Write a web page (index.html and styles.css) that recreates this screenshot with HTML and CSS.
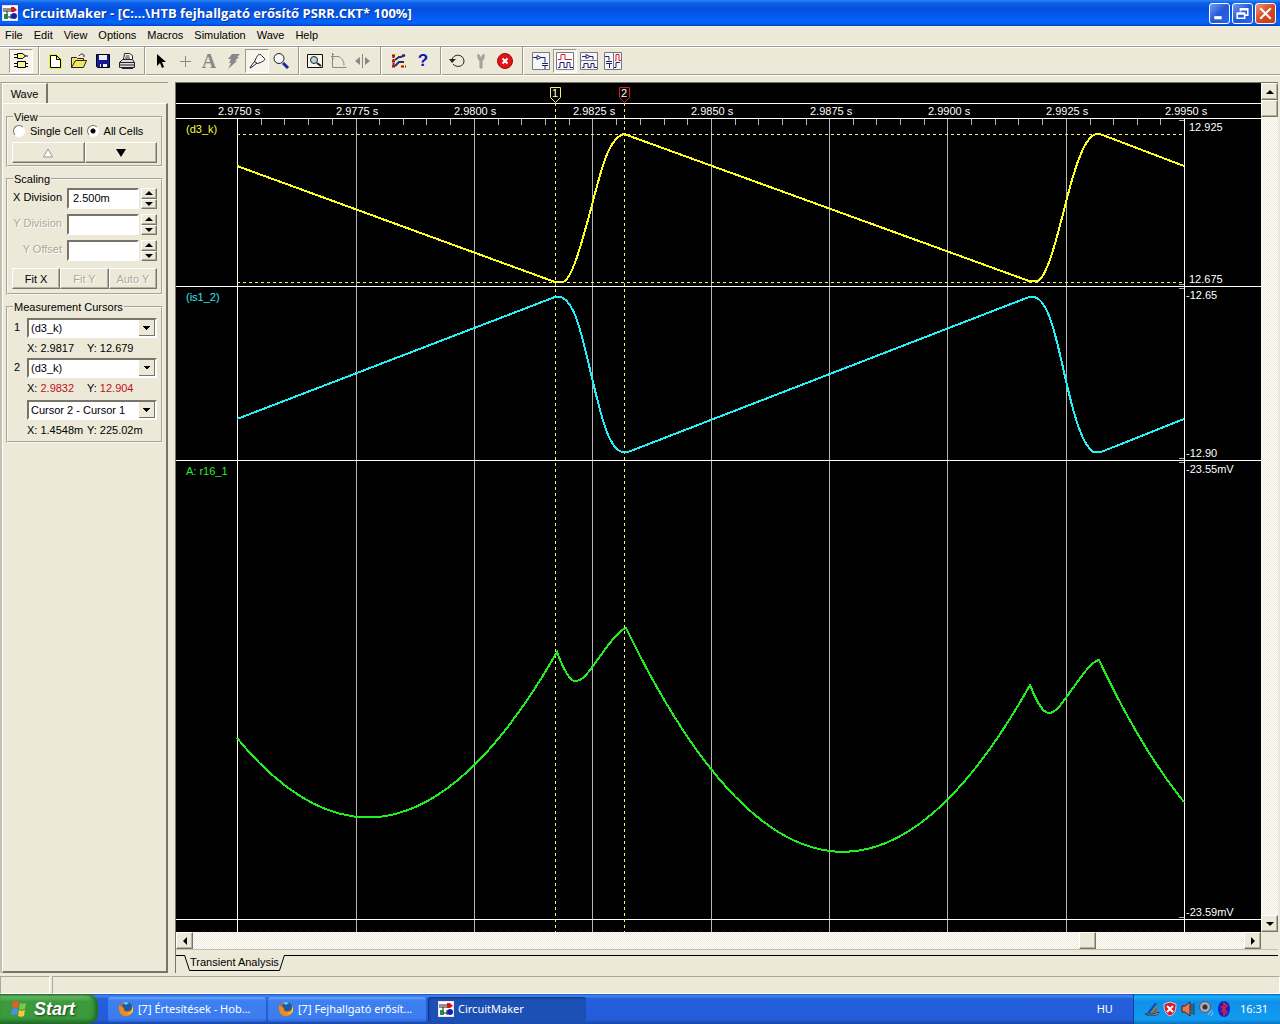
FILE: index.html
```html
<!DOCTYPE html>
<html lang="hu">
<head>
<meta charset="utf-8">
<title>CircuitMaker</title>
<link rel="stylesheet" href="styles.css">
</head>
<body>
<svg class="defs" aria-hidden="true">
  <symbol id="app-logo" viewBox="0 0 16 16">
    <rect width="16" height="16" fill="#fbd9fb"/><rect x="1" y="1" width="14" height="14" fill="#fff"/>
    <path d="M1 4h9M1 6h4v6h4M5 6h4M9 9v5" stroke="#222" fill="none"/>
    <path d="M9 2h3l3 3-3 2H9z" fill="#d01818"/><path d="M2 9h4v5H2z" fill="#159048"/><circle cx="12" cy="11" r="3" fill="#1020b0"/>
  </symbol>
  <symbol id="firefox" viewBox="0 0 16 16">
    <circle cx="8" cy="8" r="7" fill="#e86a10"/><circle cx="9" cy="6" r="5" fill="#1d5ba8"/><path d="M5 2a5 5 0 0 1 6 0L8 4z" fill="#6cc4ee"/>
    <path d="M1 4c1 2 3 1 5 3-1 3 2 4 5 3 3 0 3-3 3-5 2 4 0 9-5 10S0 11 1 4z" fill="#f08a18"/><path d="M14 5c1 4-1 7-5 8 3 1 7-1 6-6z" fill="#fbd034"/>
  </symbol>
</svg>
<div class="app">
  <header class="titlebar">
    <svg class="logo"><use href="#app-logo"/></svg>
    <h1>CircuitMaker - [C:...\HTB fejhallgató erősítő PSRR.CKT* 100%]</h1>
    <div class="window-buttons">
      <button type="button" aria-label="Minimize"><svg viewBox="0 0 18 18"><path d="M4 13h7" stroke="#fff" stroke-width="3"/></svg></button>
      <button type="button" aria-label="Restore"><svg viewBox="0 0 18 18"><path d="M7 7V4.500h7v6h-3M7 5.500h7M4 8.500h7v5H4zM4 9.500h7" fill="none" stroke="#fff" stroke-width="1.500"/></svg></button>
      <button type="button" class="close" aria-label="Close"><svg viewBox="0 0 18 18"><path d="M4 4l10 10M14 4L4 14" stroke="#fff" stroke-width="2"/></svg></button>
    </div>
  </header>
  <nav class="menubar">
    <button type="button">File</button><button type="button">Edit</button><button type="button">View</button><button type="button">Options</button><button type="button">Macros</button><button type="button">Simulation</button><button type="button">Wave</button><button type="button">Help</button>
  </nav>
  <div class="toolbar" role="toolbar">
    <div class="tool-group">
      <button type="button" class="pressed" aria-label="Parts"><svg viewBox="0 0 18 18"><path d="M5.500 1.500h5l3 2.500-3 2.500h-5zM2 2.500h3M2 5.500h3M13 4h3M5.500 9.500h8v6h-8zM2 11.500h3M2 14.500h3M13 11.500h3M13 14.500h3" fill="#f8f490" stroke="#000"/></svg></button>
    </div>
    <div class="tool-group">
      <button type="button" aria-label="New"><svg viewBox="0 0 18 18"><path d="M4.500 3.500h6l4 4v8h-10z" fill="#fff" stroke="#f2ee38" stroke-width="3"/><path d="M4.500 3.500h6l4 4v8h-10zM10.500 3.500v4h4" fill="#fff" stroke="#000"/></svg></button>
      <button type="button" aria-label="Open"><svg viewBox="0 0 18 18"><path d="M1.500 15.500v-10h5l1 1h6v2h3l-3 7zM1.500 15.500l4-7h8" fill="#f2e85c" stroke="#222"/><path d="M9 4c2-3 4-2 5-1v2" fill="none" stroke="#222"/></svg></button>
      <button type="button" aria-label="Save"><svg viewBox="0 0 18 18"><path d="M2.500 2.500h13v13h-12l-1-1z" fill="#1418a0" stroke="#000"/><path d="M5 3h8v5H5zM6 12h7v3H6z" fill="#eee"/><path d="M7 12h2v3H7z" fill="#14188c"/></svg></button>
      <button type="button" aria-label="Print"><svg viewBox="0 0 18 18"><path d="M5.500 7.500l1-6h5l3 2v4M7.500 4h4M7 6h5" fill="#fff" stroke="#222"/><path d="M1.500 10.500l3-3h10l2 3v5h-15zM1.500 10.500h15M1.500 13h15M4 16.500h11" fill="#ddd" stroke="#222"/></svg></button>
    </div>
    <div class="tool-group">
      <button type="button" aria-label="Select"><svg viewBox="0 0 18 18"><path d="M5 2v12l3-3 2 5 2-1-2-5h4z" fill="#000"/></svg></button>
      <button type="button" aria-label="Wire" disabled><svg viewBox="0 0 18 18"><path d="M9.500 4v11M4 9.500h11" stroke="#888"/></svg></button>
      <button type="button" class="letter" aria-label="Text" disabled>A</button>
      <button type="button" aria-label="Delete" disabled><svg viewBox="0 0 18 18"><path d="M8 2h8l-3 3h2l-4 4h2L4 17l3-6H5l2-4H4z" fill="#888"/></svg></button>
      <button type="button" class="pressed" aria-label="Probe"><svg viewBox="0 0 18 18"><path d="M8.500 5.500c1-3 4-4 5-2l3 3c1 2-2 3-4 4l-3 1-3-2zM7 9l-4 5-1 2 2-1 5-4" fill="#f8f8f8" stroke="#222"/></svg></button>
      <button type="button" aria-label="Zoom"><svg viewBox="0 0 18 18"><circle cx="7" cy="6.500" r="5" fill="#f4f6fa" stroke="#222"/><path d="M11 11l5 5" stroke="#1a28a0" stroke-width="3"/></svg></button>
    </div>
    <div class="tool-group">
      <button type="button" aria-label="Fit"><svg viewBox="0 0 18 18"><path d="M1.500 2.500h15v13h-15z" fill="#f6f6ee" stroke="#111"/><circle cx="8" cy="8" r="3.500" fill="#b9d3d5" stroke="#222"/><path d="M11 11l4 3" stroke="#222" stroke-width="2"/></svg></button>
      <button type="button" aria-label="Rotate" disabled><svg viewBox="0 0 18 18"><path d="M2.500 1v14.500h14M1 4.500h7M4 2L1.500 4.500 4 7M8 4.500c4 1 6 5 6 9" fill="none" stroke="#888"/></svg></button>
      <button type="button" aria-label="Mirror" disabled><svg viewBox="0 0 18 18"><path d="M8.500 2v14" stroke="#888"/><path d="M6 5v8L1 9zM11 5v8l5-4z" fill="#888"/></svg></button>
    </div>
    <div class="tool-group wide">
      <button type="button" aria-label="Simulation mode"><svg viewBox="0 0 18 18"><path d="M5 2h10v13H5z" fill="#f8ec9a"/><path d="M2 3.500h4M12 3.500h4M2 9.500h3M2 14.500h4M11 14.500h5M3.500 3v12" stroke="#a01010" stroke-dasharray="3 1" stroke-width="2"/><path d="M5 8l4-3h2l4-2M5 14l4-4h5" fill="none" stroke="#1828b0" stroke-width="2"/></svg></button>
      <button type="button" class="letter help" aria-label="Help">?</button>
    </div>
    <div class="tool-group">
      <button type="button" aria-label="Reset"><svg viewBox="0 0 18 18"><path d="M4 8c1-7 12-6 12 1 0 6-8 7-11 3" fill="none" stroke="#222"/><path d="M1 7h7l-4 4z" fill="#222"/></svg></button>
      <button type="button" aria-label="Step" disabled><svg viewBox="0 0 18 18"><path d="M6 2v4l1 2h1v8h2V8h1l1-2V2l-2 2v2H8V4z" fill="#aaa" stroke="#999"/></svg></button>
      <button type="button" aria-label="Stop"><svg viewBox="0 0 18 18"><circle cx="9" cy="9" r="7.500" fill="#e01414" stroke="#a00808"/><path d="M6.500 6.500l5 5M11.500 6.500l-5 5" stroke="#fff" stroke-width="2"/></svg></button>
    </div>
    <div class="tool-group wide">
      <button type="button" aria-label="Schematic"><svg viewBox="0 0 18 18"><path d="M.5.5h17v17H.5z" fill="#f6f6f6" stroke="#778"/><path d="M1 5.500h4v-2l4 2-4 2v-2M9 5.500h4v5M10 11.500h6M10 13.500h6M13 14v3" fill="none" stroke="#222270"/></svg></button>
      <button type="button" class="pressed" aria-label="Waves"><svg viewBox="0 0 18 18"><path d="M.5.5h17v17H.5z" fill="#fff" stroke="#778"/><path d="M2 7.500h3v-5h4v5h7" fill="none" stroke="#d02020"/><path d="M2 15.500h2v-5h4v5h3v-5h3v5h3" fill="none" stroke="#222270"/></svg></button>
      <button type="button" aria-label="Split horizontally"><svg viewBox="0 0 18 18"><path d="M.5.5h17v17H.5zM0 8.500h18" fill="#f6f6f6" stroke="#778"/><path d="M2 4.500h4v-2l4 2-4 2v-2M10 4.500h3v3M2 15.500h2v-4h4v4h3v-4h3v4h3" fill="none" stroke="#222270"/></svg></button>
      <button type="button" aria-label="Split vertically"><svg viewBox="0 0 18 18"><path d="M.5.5h17v17H.5zM9.500 0v18" fill="#f6f6f6" stroke="#778"/><path d="M1 4.500h4v4M2 9.500h6M2 11.500h6M5.500 12v4M10 15.500h2v-5h4" fill="none" stroke="#222270"/><path d="M11 8.500h1v-6h3v6h2" fill="none" stroke="#d02020"/></svg></button>
    </div>
  </div>

  <main class="workspace">
    <aside class="side">
      <div class="side-tabs"><button type="button">Wave</button></div>
      <form class="side-page">
        <fieldset>
          <legend>View</legend>
          <div class="radios">
            <label><input type="radio" name="cells">Single Cell</label>
            <label><input type="radio" name="cells" checked>All Cells</label>
          </div>
          <div class="button-row">
            <button type="button" aria-label="Previous cell"><svg class="cell-arrow" viewBox="0 0 10 10"><path d="M.5 9L5 1l4.500 8z" fill="#fff" stroke="#999"/></svg></button>
            <button type="button" aria-label="Next cell"><svg class="cell-arrow" viewBox="0 0 10 10"><path d="M0 1h10L5 9z"/></svg></button>
          </div>
        </fieldset>
        <fieldset class="scaling">
          <legend>Scaling</legend>
          <div class="field"><label for="xdiv">X Division</label><input id="xdiv" type="text" value="2.500m">
            <span class="spin"><button type="button" aria-label="Up"><svg viewBox="0 0 8 4"><path d="M0 4h8L4 0z"/></svg></button><button type="button" aria-label="Down"><svg viewBox="0 0 8 4"><path d="M0 0h8L4 4z"/></svg></button></span></div>
          <div class="field off"><label for="ydiv">Y Division</label><input id="ydiv" type="text" disabled>
            <span class="spin"><button type="button" aria-label="Up"><svg viewBox="0 0 8 4"><path d="M0 4h8L4 0z"/></svg></button><button type="button" aria-label="Down"><svg viewBox="0 0 8 4"><path d="M0 0h8L4 4z"/></svg></button></span></div>
          <div class="field off"><label for="yoff">Y Offset</label><input id="yoff" type="text" disabled>
            <span class="spin"><button type="button" aria-label="Up"><svg viewBox="0 0 8 4"><path d="M0 4h8L4 0z"/></svg></button><button type="button" aria-label="Down"><svg viewBox="0 0 8 4"><path d="M0 0h8L4 4z"/></svg></button></span></div>
          <div class="button-row">
            <button type="button">Fit X</button><button type="button" disabled>Fit Y</button><button type="button" disabled>Auto Y</button>
          </div>
        </fieldset>
        <fieldset class="cursors">
          <legend>Measurement Cursors</legend>
          <div class="cursor">
            <label for="c1">1</label><select id="c1"><option>(d3_k)</option></select>
            <div class="readout"><span>X: 2.9817</span><span>Y: 12.679</span></div>
          </div>
          <div class="cursor">
            <label for="c2">2</label><select id="c2"><option>(d3_k)</option></select>
            <div class="readout"><span>X: <b>2.9832</b></span><span>Y: <b>12.904</b></span></div>
          </div>
          <div class="cursor">
            <span></span><select aria-label="Cursor difference"><option>Cursor 2 - Cursor 1</option></select>
            <div class="readout"><span>X: 1.4548m</span><span>Y: 225.02m</span></div>
          </div>
        </fieldset>
      </form>
    </aside>

    <section class="plot">
      <svg class="chart" viewBox="176 83 1085 849" role="img" aria-label="Transient Analysis">
        <g class="crisp">
          <path class="grid" d="M356.500 119V932M474.500 119V932M592.500 119V932M711.500 119V932M829.500 119V932M947.500 119V932M1066.500 119V932"/>
          <path class="grid" d="M261.500 119v6M284.500 119v6M308.500 119v6M332.500 119v6M379.500 119v6M403.500 119v6M426.500 119v6M450.500 119v6M498.500 119v6M521.500 119v6M545.500 119v6M569.500 119v6M616.500 119v6M640.500 119v6M664.500 119v6M687.500 119v6M735.500 119v6M758.500 119v6M782.500 119v6M806.500 119v6M853.500 119v6M876.500 119v6M900.500 119v6M924.500 119v6M971.500 119v6M995.500 119v6M1018.500 119v6M1042.500 119v6M1090.500 119v6M1113.500 119v6M1137.500 119v6M1160.500 119v6"/>
          <path class="grid" d="M1179 120.500h5M1179 284.500h5M1179 288.500h5M1179 458.500h5M1179 462.500h5M1179 917.500h5"/>
          <path class="axis" d="M176 103.500H1261M176 118.500H1261M176 286.500H1261M176 460.500H1261M176 919.500H1261M237.500 119V932M1184.500 119V932"/>
          <path class="cursor-line" d="M237 134.500H1184M237 282.500H1184M555.500 103V932M624.500 103V932"/>
          <g class="waves">
            <path class="yellow" d="M237 166L555 282H563C572 280 582 242 592 205C602 166 609 138 624 134L1029 281H1037C1046 280 1056 242 1066 202C1076 163 1085 137 1096 134H1100L1184 166"/>
            <path class="cyan" d="M237 419L555 297C574 292 582 336 592 378C602 420 609 448 622 452H628L1029 297C1048 292 1056 337 1066 381C1076 424 1083 444 1093 452H1101L1184 419"/>
            <path class="green" d="M237 738Q397 932 557 652C563 668 569 681 575 681C583 681 588 673 598 659C609 644 618 631 626 628Q828 1045 1030 685C1036 700 1042 713 1049 713C1057 713 1064 700 1073 688C1084 673 1091 662 1099 660Q1141 749 1184 802"/>
          </g>
        </g>
        <path class="flag one" d="M550.500 87.500h10v10l-5 5-5-5z"/><text x="552" y="97">1</text>
        <path class="flag two" d="M619.500 87.500h10v10l-5 5-5-5z"/><text x="621" y="97">2</text>
        <g>
          <text x="218" y="115">2.9750 s</text><text x="336" y="115">2.9775 s</text><text x="454" y="115">2.9800 s</text><text x="573" y="115">2.9825 s</text><text x="691" y="115">2.9850 s</text><text x="810" y="115">2.9875 s</text><text x="928" y="115">2.9900 s</text><text x="1046" y="115">2.9925 s</text><text x="1165" y="115">2.9950 s</text>
          <text x="1189" y="131">12.925</text><text x="1189" y="283">12.675</text><text x="1186" y="299">-12.65</text><text x="1186" y="457">-12.90</text><text x="1186" y="473">-23.55mV</text><text x="1186" y="916">-23.59mV</text>
        </g>
        <text class="yellow-text" x="186" y="133">(d3_k)</text><text class="cyan-text" x="186" y="301">(is1_2)</text><text class="green-text" x="186" y="475">A: r16_1</text>
      </svg>
      <div class="scroll vertical">
        <button type="button" aria-label="Scroll up"><svg viewBox="0 0 8 4"><path d="M0 4h8L4 0z"/></svg></button>
        <span class="thumb"></span><span class="rest"></span>
        <button type="button" aria-label="Scroll down"><svg viewBox="0 0 8 4"><path d="M0 0h8L4 4z"/></svg></button>
      </div>
      <div class="scroll horizontal">
        <button type="button" aria-label="Scroll left"><svg viewBox="0 0 4 8"><path d="M4 0v8L0 4z"/></svg></button>
        <span class="before"></span><span class="thumb"></span><span class="rest"></span>
        <button type="button" aria-label="Scroll right"><svg viewBox="0 0 4 8"><path d="M0 0v8l4-4z"/></svg></button>
      </div>
      <div class="corner"></div>
      <div class="sheet-tabs">
        <span class="sheet-lead"></span>
        <button type="button"><svg viewBox="0 0 6 16"><path d="M.5 0l5 15.500H6" fill="none" stroke="#000"/></svg><span>Transient Analysis</span><svg viewBox="0 0 6 16"><path d="M5.500 0l-5 15.500H0" fill="none" stroke="#000"/></svg></button>
        <span class="sheet-rest"></span>
      </div>
    </section>
  </main>

  <div class="statusbar"><span></span><span></span></div>

  <footer class="taskbar">
    <button type="button" class="start"><svg viewBox="0 0 18 18"><path d="M3 2c2-1 4-1 6 0L8 8C6 7 4 7 2 8z" fill="#f05a28"/><path d="M10 3c2 1 4 1 6 0l-1 6c-2 1-4 1-6 0z" fill="#7cc84a"/><path d="M2 9c2-1 4-1 6 0l-1 6c-2-1-4-1-6 0z" fill="#4a8cf0"/><path d="M9 10c2 1 4 1 6 0l-1 6c-2 1-4 1-6 0z" fill="#fac832"/></svg>Start</button>
    <button type="button" class="task"><svg><use href="#firefox"/></svg>[7] Értesítések - Hob...</button>
    <button type="button" class="task"><svg><use href="#firefox"/></svg>[7] Fejhallgató erősít...</button>
    <button type="button" class="task active"><svg><use href="#app-logo"/></svg>CircuitMaker</button>
    <span class="lang">HU</span>
    <div class="tray">
      <svg viewBox="0 0 16 16"><path d="M1 13h9l5-2-2 3H3z" fill="#e8e8e8" stroke="#333"/><path d="M3 12L11 2l2 1-7 9z" fill="#2038d0"/><path d="M6 12l6-8 2 2-5 6z" fill="#30b040"/><path d="M8 12l5-6v3l-3 3z" fill="#e03030"/></svg>
      <svg viewBox="0 0 16 16"><path d="M8 1l6 2c0 6-1 10-6 12C3 13 2 9 2 3z" fill="#d41c2c" stroke="#e8c8d0"/><path d="M5 5l6 6M11 5l-6 6" stroke="#fff" stroke-width="2"/></svg>
      <svg viewBox="0 0 16 16"><path d="M2 5h3l5-4v14l-5-4H2z" fill="#e87850" stroke="#501810"/><path d="M12 3v10M14 2v12" stroke="#333"/></svg>
      <svg viewBox="0 0 16 16"><circle cx="7" cy="6" r="5.500" fill="#aab" stroke="#556"/><circle cx="7" cy="6" r="2.500" fill="#333"/><path d="M10 14l4-5M13 15l2-4" stroke="#8cc8ff"/></svg>
      <svg viewBox="0 0 16 16"><ellipse cx="8" cy="8" rx="6" ry="8" fill="#1420c8"/><path d="M5 5l6 6-3 3V2l3 3-6 6" fill="none" stroke="#e02030" stroke-width="1.500"/></svg>
      <time>16:31</time>
    </div>
  </footer>
</div>
</body>
</html>
```
FILE: styles.css
```css
*, *::before { box-sizing: border-box; }

body {
  margin: 0;
  background: #ece9d8;
  color: #000;
  font: 11px/14px "Liberation Sans", Arial, sans-serif;
}

button, input, select {
  margin: 0;
  padding: 0;
  border: 0;
  border-radius: 0;
  background: none;
  color: inherit;
  font: inherit;
}

svg { display: block; flex: none; }
.defs { width: 0; height: 0; position: absolute; }

.app {
  display: flex;
  flex-direction: column;
  height: 100vh;
  overflow: hidden;
}

/* Title bar */
.titlebar {
  display: flex;
  align-items: center;
  height: 26px;
  padding: 0 4px 0 2px;
  background: linear-gradient(#2a86f8 0, #0a5ee8 12%, #0450de 35%, #0460f8 75%, #0464f8 88%, #0344c4);
}
.logo { width: 16px; height: 16px; }
.titlebar h1 {
  flex: 1;
  margin: 0 0 0 4px;
  color: #fff;
  font: 700 13px/20px "Open Sans", sans-serif;
  text-shadow: 1px 1px #0a3090;
  white-space: nowrap;
}
.window-buttons { display: flex; gap: 2px; }
.window-buttons button {
  width: 21px;
  height: 21px;
  border: 1px solid #fff;
  border-radius: 3px;
  background: linear-gradient(135deg, #6f9cf4, #2458d8 50%, #2a66e8);
}
.window-buttons .close { background: linear-gradient(135deg, #f09878, #d84820 50%, #c83c18); }
.window-buttons svg { width: 19px; height: 19px; }

/* Menu */
.menubar {
  display: flex;
  gap: 11px;
  height: 20px;
  padding: 1px 5px 3px;
  border-bottom: 1px solid #fff;
}

/* Toolbar */
.toolbar {
  display: flex;
  align-items: center;
  height: 30px;
  padding-left: 9px;
  border-top: 1px solid #9d9a8c;
  border-bottom: 1px solid #fff;
  box-shadow: inset 0 1px #fff, inset 0 -1px #9d9a8c;
}
.tool-group { display: flex; align-items: center; }
.tool-group + .tool-group::before {
  content: "";
  width: 2px;
  height: 28px;
  margin: 0 3px 0 5px;
  border-left: 1px solid #9d9a8c;
  border-right: 1px solid #fff;
}
.tool-group.wide::before { margin: 0 5px; }
.tool-group button {
  display: grid;
  place-items: center;
  width: 24px;
  height: 24px;
}
.tool-group svg { width: 18px; height: 18px; }
.tool-group .pressed {
  border: 1px solid;
  border-color: #9d9a8c #fff #fff #9d9a8c;
  background: #f6f4ec;
}
.tool-group .letter { color: #888; font: bold 20px/20px "Liberation Serif", serif; }
.tool-group .help { color: #1010c0; font: bold 17px/20px "Liberation Sans", sans-serif; }

/* Workspace */
.workspace {
  flex: 1;
  display: flex;
  gap: 7px;
  min-height: 0;
  padding: 6px 2px 3px 0;
}

.side {
  display: flex;
  flex-direction: column;
  width: 168px;
  border-left: 2px solid #c4c1b2;
  border-top: 1px solid #9d9a8c;
}
.side-tabs button {
  display: block;
  width: 46px;
  height: 20px;
  border-left: 1px solid #fff;
  border-top: 1px solid #fff;
  border-right: 2px solid #77756a;
}
.side-page {
  flex: 1;
  padding: 7px 3px 0;
  border: 1px solid;
  border-color: #fff #77756a #77756a #fff;
  border-right-width: 2px;
  border-bottom-width: 2px;
}
fieldset {
  min-width: 0;
  margin: 0 0 6px;
  padding: 1px 4px 2px;
  border: 2px groove #f8f6ec;
}
legend { margin-left: 1px; padding: 0 1px; line-height: 12px; }
.radios { display: flex; gap: 4px; padding-left: 1px; }
.radios label { display: flex; align-items: center; gap: 5px; height: 14px; white-space: nowrap; }
.radios input {
  appearance: none;
  width: 12px;
  height: 12px;
  border: 1px solid;
  border-color: #77756a #fff #fff #77756a;
  border-radius: 50%;
  background: #fff;
}
.radios input:checked { background: radial-gradient(circle, #000 2px, #fff 3px); }

.button-row { display: flex; margin-top: 4px; }
.button-row button {
  flex: 1;
  display: grid;
  place-items: center;
  height: 21px;
}
.button-row button, .spin button, .scroll button, .thumb {
  border: 1px solid;
  border-color: #fff #77756a #77756a #fff;
  box-shadow: inset -1px -1px #b4b1a0;
  background: #ece9d8;
}
.button-row button:disabled { color: #aca899; text-shadow: 1px 1px #fff; }
.cell-arrow { width: 10px; height: 10px; }

.scaling { padding: 3px 4px 4px; }
.field { display: flex; align-items: center; gap: 2px; margin-bottom: 5px; }
.field label { width: 50px; height: 18px; margin-right: 3px; text-align: right; white-space: nowrap; }
.field.off label { color: #aca899; text-shadow: 1px 1px #fff; }
.field input {
  flex: 1;
  min-width: 0;
  height: 21px;
  padding: 0 4px 2px;
  border: 2px solid;
  border-color: #77756a #fff #fff #77756a;
  background: #fff;
}
.spin { display: flex; flex-direction: column; width: 16px; height: 21px; }
.spin button { flex: 1; display: grid; place-items: center; }
.spin svg { width: 8px; height: 4px; }
.scaling .button-row { margin-top: 7px; }

.cursors { padding: 5px 4px 3px; }
.cursor {
  display: grid;
  grid-template-columns: 12px 1fr;
  column-gap: 2px;
  padding-left: 1px;
  margin-bottom: 2px;
  white-space: nowrap;
}
.cursor:last-child { margin: 4px 0 0; }
.cursor label { padding: 2px 0 0 1px; }
.cursor select {
  appearance: none;
  min-width: 0;
  height: 20px;
  padding-left: 2px;
  border: 2px solid;
  border-color: #77756a #fff #fff #77756a;
  background:
    linear-gradient(135deg, #000 50%, transparent 50%) no-repeat right 4px top 6px / 4px 4px,
    linear-gradient(225deg, #000 50%, transparent 50%) no-repeat right 8px top 6px / 4px 4px,
    linear-gradient(#77756a, #77756a) no-repeat right / 1px 100%,
    linear-gradient(#77756a, #77756a) no-repeat right bottom / 16px 1px,
    linear-gradient(#ece9d8, #ece9d8) no-repeat right / 16px 100%,
    #fff;
}
.readout { grid-column: 2; display: grid; grid-template-columns: 60px 1fr; line-height: 16px; padding-top: 2px; }
.readout b { color: #c01020; font-weight: normal; }

/* Plot */
.plot {
  flex: 1;
  display: grid;
  grid-template: minmax(0, 1fr) 17px 24px / minmax(0, 1fr) 17px;
  min-width: 0;
  border-top: 1px solid #77756a;
  border-left: 1px solid #77756a;
}
.chart { width: 100%; height: 100%; background: #000; }
.chart text { fill: #fff; font: 11px "Liberation Sans", Arial, sans-serif; }
.chart .yellow-text { fill: #f8f840; }
.chart .cyan-text { fill: #30e8f0; }
.chart .green-text { fill: #30e830; }
.crisp { shape-rendering: crispEdges; }
.grid, .axis, .cursor-line, .waves, .flag { fill: none; }
.grid { stroke: #b4b4b4; }
.axis { stroke: #fff; }
.cursor-line { stroke: #f8f470; stroke-dasharray: 3 3; }
.one { stroke: #f8f060; }
.two { stroke: #e02020; }
.waves { stroke-width: 2; }
.yellow { stroke: #ffff28; }
.cyan { stroke: #28f0f8; }
.green { stroke: #20f020; }

.scroll { display: flex; background: repeating-conic-gradient(#fff 0 25%, #ece9d8 0 50%) 0 0 / 2px 2px; }
.scroll.vertical { flex-direction: column; }
.scroll button, .thumb { display: grid; place-items: center; flex: none; width: 17px; height: 17px; }
.vertical svg { width: 8px; height: 4px; }
.horizontal svg { width: 4px; height: 8px; }
.rest { flex: 1; }
.before { flex: 6; }

.sheet-tabs { grid-column: 1 / -1; display: flex; padding-top: 5px; border-top: 1px solid #c4c1b2; }
.sheet-lead { width: 8px; border-top: 1px solid #000; }
.sheet-rest { flex: 1; border-top: 1px solid #000; }
.sheet-tabs button { display: flex; height: 16px; }
.sheet-tabs button span { height: 16px; border-bottom: 1px solid #000; }
.sheet-tabs svg { width: 6px; height: 16px; }

/* Status bar */
.statusbar { display: flex; gap: 2px; height: 18px; }
.statusbar span { border: 1px solid; border-color: #aca899 #fff #fff #aca899; flex: 1; }
.statusbar span:first-child { flex: 0 0 50px; }

/* Taskbar */
.taskbar {
  display: flex;
  align-items: center;
  gap: 2px;
  height: 30px;
  background: linear-gradient(#1c4cb8 0, #4088f0 6%, #2460dc 16%, #245cd8 85%, #1a48a8);
  color: #fff;
  font: 11px/14px "Noto Sans", sans-serif;
}
.start {
  display: flex;
  align-items: center;
  gap: 6px;
  width: 98px;
  height: 30px;
  margin-right: 8px;
  padding-left: 10px;
  border-radius: 0 10px 10px 0;
  background: linear-gradient(#2c7c2c 0, #68b868 8%, #3c9c3c 25%, #38983c 80%, #246c28);
  box-shadow: inset -3px 0 4px #206424;
  font: italic bold 18px/24px "Liberation Sans", sans-serif;
  text-shadow: 1px 1px 2px #1c401c;
}
.start svg { width: 18px; height: 18px; }
.task {
  display: flex;
  align-items: center;
  gap: 4px;
  width: 158px;
  height: 25px;
  padding-left: 10px;
  border-radius: 3px;
  background: linear-gradient(#6aa4fc 0, #3c80f0 15%, #3c7cf0 85%, #2c64d4);
  white-space: nowrap;
}
.task.active { background: #1c50b4; box-shadow: inset 1px 1px 2px #10307c; }
.task svg { width: 16px; height: 16px; }
.lang { margin-left: auto; }
.tray {
  display: flex;
  align-items: center;
  gap: 2px;
  height: 30px;
  margin-left: 18px;
  padding: 0 12px 0 10px;
  border-left: 1px solid #0c3c9c;
  background: linear-gradient(#0c68c0 0, #18b0f8 8%, #1090e8 25%, #109cf0 85%, #0c70c0);
}
.tray svg { width: 16px; height: 16px; }
.tray time { margin-left: 6px; }
```
